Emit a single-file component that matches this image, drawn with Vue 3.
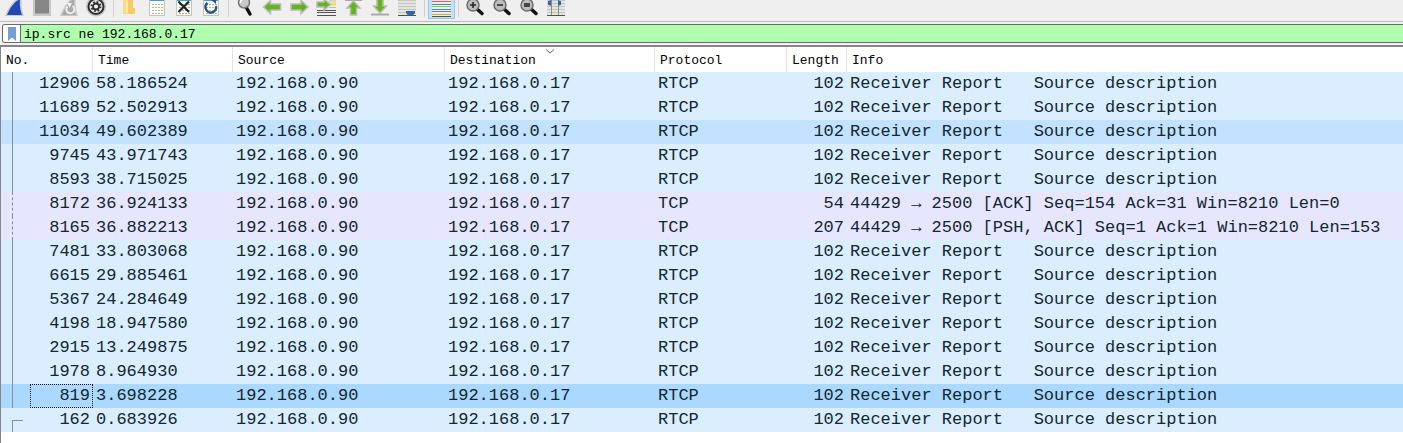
<template>
  <div class="window">
    <div class="toolbar">
      <button type="button" aria-label="Start capture">
        <svg viewBox="0 0 27 21">
          <path d="M3 16 C6 8 10 2 17 -3 H20 C19 5 20 11 22 16 Z" fill="#c9c9c9" />
          <path d="M5 15 C8 8 12 2 18 -1 C17.500 5 18 10 20 15 Z" fill="#2248b8" />
        </svg>
      </button>
      <button type="button" aria-label="Stop capture">
        <svg viewBox="0 0 27 21">
          <rect x="4" y="-2" width="18" height="18" fill="#c8c8c8" />
          <rect x="6" y="-2" width="14" height="15.500" fill="#878787" />
        </svg>
      </button>
      <button type="button" aria-label="Restart capture">
        <svg viewBox="0 0 27 21">
          <path d="M4 16 C7 8 11 2 17 -3 H20 C19 5 20 11 22 16 Z" fill="#c9c9c9" />
          <path d="M6 15 C9 8 12 2 18 -1 C17.500 5 18 10 20 15 Z" fill="#aaa" />
          <path d="M11.500 6.500 A4 4 0 1 0 16.500 6" fill="none" stroke="#eee" stroke-width="2" />
          <path d="M11 3 L16 3 L13.500 8 Z" fill="#eee" />
        </svg>
      </button>
      <button type="button" aria-label="Capture options">
        <svg viewBox="0 0 27 21">
          <circle cx="13" cy="6.500" r="10" fill="#c6c6c6" />
          <circle cx="13" cy="6.500" r="7.500" fill="#f0f0f0" stroke="#303030" stroke-width="2" />
          <circle cx="13" cy="6.500" r="4.500" fill="none" stroke="#303030" stroke-width="2" stroke-dasharray="1.800 1.734" />
          <circle cx="13" cy="6.500" r="3" fill="none" stroke="#303030" stroke-width="1.800" />
        </svg>
      </button>
      <i class="sep"></i>
      <button type="button" aria-label="Open">
        <svg viewBox="0 0 27 21">
          <path d="M6 -1 H14 V14 H6 Z" fill="#fbdc86" />
          <path d="M11 0 H16 V8 H18 V14 H9 V12 L11 10 Z" fill="#f5cd68" />
          <path d="M9 0 L11 2 V12 L9 14 Z" fill="#ffe9a9" />
        </svg>
      </button>
      <button v-for="kind in ['save', 'close', 'reload']" :key="kind" type="button" :aria-label="kind">
        <svg viewBox="0 0 27 21">
          <rect x="5" y="-2" width="16" height="18" fill="#c4c6c2" />
          <rect x="6" y="-1" width="14" height="16" fill="#fbfbef" />
          <path d="M6 0.500 H20" stroke="#3aa0d8" />
          <path d="M8 4.500 H19 M8 7.500 H19 M8 10.500 H19 M8 13.500 H19" stroke="#aeb3b5" stroke-dasharray="2 1" />
          <path v-if="kind === 'close'" d="M7.500 1.500 L18 12 M18 1.500 L7.500 12" stroke="#222" stroke-width="2.200" />
          <template v-if="kind === 'reload'">
            <path d="M9.500 3 A5.300 5.300 0 1 0 18 6" fill="none" stroke="#27528f" stroke-width="2.300" />
            <path d="M12 -1 H18 V4 Z" fill="#27528f" />
          </template>
        </svg>
      </button>
      <i class="sep"></i>
      <button type="button" aria-label="Find packet">
        <svg viewBox="0 0 27 21">
          <path d="M14 7 L18 14" stroke="#111" stroke-width="3.500" stroke-linecap="round" />
          <circle cx="12" cy="2.500" r="5.500" fill="#c9c9c9" stroke="#777" stroke-width="1.500" />
          <path d="M8.500 3 A3.500 3.500 0 0 1 12 -1" fill="none" stroke="#fff" stroke-width="1.500" />
        </svg>
      </button>
      <button type="button" aria-label="Previous packet">
        <svg viewBox="0 0 27 21"><path d="M4.500 7 L11.500 0.500 V4 H21.500 V10 H11.500 V13.500 Z" class="arrow" /></svg>
      </button>
      <button type="button" aria-label="Next packet">
        <svg viewBox="0 0 27 21"><path d="M22 7 L15 0.500 V4 H5 V10 H15 V13.500 Z" class="arrow" /></svg>
      </button>
      <button type="button" aria-label="Go to packet">
        <svg viewBox="0 0 27 21">
          <path d="M4 10.500 H23 M4 15.500 H23 M4 12.500 H23" stroke="#50524f" />
          <path d="M16 7.500 H23 M16 1 H23" stroke="#bbb" />
          <path d="M16 4 H23" stroke="#fadb45" stroke-width="3" />
          <path d="M17.500 4.500 L11 -1 V2 H4 V7 H11 V10 Z" class="arrow" />
        </svg>
      </button>
      <button type="button" aria-label="First packet">
        <svg viewBox="0 0 27 21">
          <path d="M5 0 H22" stroke="#aaa" stroke-width="2" />
          <path d="M13.500 1 L20 8 H16.500 V15 H10.500 V8 H7 Z" class="arrow" />
        </svg>
      </button>
      <button type="button" aria-label="Last packet">
        <svg viewBox="0 0 27 21">
          <path d="M4 14.500 H22" stroke="#aaa" stroke-width="2" />
          <path d="M13 13 L19.500 6 H16 V-2 H10 V6 H6.500 Z" class="arrow" />
        </svg>
      </button>
      <button type="button" aria-label="Auto scroll">
        <svg viewBox="0 0 27 21">
          <rect x="4" y="0" width="18" height="15" fill="#e4e4df" />
          <path d="M4 0.500 H22 M4 3.500 H22 M4 6.500 H22 M4 9.500 H22 M4 12.500 H13" stroke="#c3c5bf" />
          <path d="M4 15.500 H22" stroke="#50524f" />
          <path d="M12 11 H21 V13 L19 15.500 H14 L12 13 Z" fill="#3567a8" />
        </svg>
      </button>
      <i class="sep"></i>
      <button type="button" aria-label="Colorize" class="checked">
        <svg viewBox="0 0 27 21">
          <rect x="4" y="0" width="19" height="16" fill="#e6efeb" />
          <path v-for="line in colorLines" :key="line.y" :d="`M4 ${line.y}.5 H23`" :stroke="line.color" />
        </svg>
      </button>
      <i class="sep"></i>
      <button v-for="kind in ['Zoom in', 'Zoom out', 'Normal size']" :key="kind" type="button" :aria-label="kind">
        <svg viewBox="0 0 27 21">
          <path d="M15 9 L20 13.500" stroke="#111" stroke-width="3.500" stroke-linecap="round" />
          <circle cx="11" cy="5" r="6" fill="#bdbdbd" stroke="#6c6c6c" stroke-width="1.500" />
          <path v-if="kind === 'Zoom in'" d="M8 5 H14 M11 2 V8" stroke="#222" stroke-width="1.500" />
          <path v-if="kind === 'Zoom out'" d="M8 5 H14" stroke="#222" stroke-width="1.500" />
          <path v-if="kind === 'Normal size'" d="M8 4 H14 M8 6 H14" stroke="#222" stroke-width="1.500" />
        </svg>
      </button>
      <button type="button" aria-label="Resize columns">
        <svg viewBox="0 0 27 21">
          <rect x="4" y="0" width="18" height="15" fill="#e4e4df" />
          <path d="M4 0.500 H22 M4 3.500 H22 M4 6.500 H22 M4 9.500 H22 M4 12.500 H22" stroke="#c3c5bf" />
          <path d="M8.500 0 V15 M15.500 0 V15" stroke="#8b8d88" />
          <path d="M4 15.500 H22" stroke="#50524f" />
          <path d="M5 1 H6 L8 0 V6 L6 5 H5 Z M18 1 H17 L15 0 V6 L17 5 H18 Z" fill="#3567a8" />
        </svg>
      </button>
    </div>

    <div class="filter-bar">
      <div class="filter">
        <button type="button" class="bookmark" aria-label="Bookmarks">
          <svg viewBox="0 0 8 14"><path d="M0 0 H8 V14 L4 10.500 L0 14 Z" fill="#739fd3" /></svg>
        </button>
        <input v-model="filter" type="text" aria-label="Display filter" spellcheck="false" />
      </div>
    </div>

    <div class="packets">
      <table>
        <colgroup>
          <col class="col-no" />
          <col class="col-time" />
          <col class="col-source" />
          <col class="col-destination" />
          <col class="col-protocol" />
          <col class="col-length" />
          <col />
        </colgroup>
        <thead>
          <tr>
            <th v-for="name in columns" :key="name">
              {{ name }}
              <svg v-if="name === 'Destination'" class="sort" viewBox="0 0 9 5">
                <path d="M0.500 0.500 L4.500 4 L8.500 0.500" fill="none" stroke="#666" />
              </svg>
            </th>
          </tr>
        </thead>
        <tbody>
          <tr v-for="p in packets" :key="p.no" :class="p.state">
            <td class="number">{{ p.no }}</td>
            <td>{{ p.time }}</td>
            <td>192.168.0.90</td>
            <td>192.168.0.17</td>
            <td>{{ p.protocol }}</td>
            <td class="number">{{ p.length }}</td>
            <td>{{ p.info }}</td>
          </tr>
        </tbody>
      </table>
    </div>
  </div>
</template>

<script setup>
import { ref } from 'vue';

const filter = ref('ip.src ne 192.168.0.17');

const columns = ['No.', 'Time', 'Source', 'Destination', 'Protocol', 'Length', 'Info'];

const colorLines = [
  { y: 1, color: '#ef5b50' },
  { y: 4, color: '#4a86c8' },
  { y: 6, color: '#7bd63a' },
  { y: 9, color: '#4a86c8' },
  { y: 11, color: '#8a6fa8' },
  { y: 14, color: '#d0ac28' },
  { y: 16, color: '#50524f' },
];

const rtcp = (no, time, state = '') => ({
  no,
  time,
  state,
  protocol: 'RTCP',
  length: 102,
  info: 'Receiver Report   Source description',
});

const tcp = (no, time, length, info) => ({ no, time, length, info, state: 'tcp', protocol: 'TCP' });

const packets = [
  rtcp(12906, '58.186524'),
  rtcp(11689, '52.502913'),
  rtcp(11034, '49.602389', 'hovered'),
  rtcp(9745, '43.971743'),
  rtcp(8593, '38.715025'),
  tcp(8172, '36.924133', 54, '44429 → 2500 [ACK] Seq=154 Ack=31 Win=8210 Len=0'),
  tcp(8165, '36.882213', 207, '44429 → 2500 [PSH, ACK] Seq=1 Ack=1 Win=8210 Len=153'),
  rtcp(7481, '33.803068'),
  rtcp(6615, '29.885461'),
  rtcp(5367, '24.284649'),
  rtcp(4198, '18.947580'),
  rtcp(2915, '13.249875'),
  rtcp(1978, '8.964930'),
  rtcp(819, '3.698228', 'selected'),
  rtcp(162, '0.683926', 'first'),
];
</script>

<style>
body {
  margin: 0;
  background: #fff;
}
</style>

<style scoped>
.window {
  overflow: hidden;
  background: #fff;
}

button {
  padding: 0;
  border: none;
  background: none;
}

.toolbar {
  display: flex;
  height: 21px;
  padding-left: 2px;
  background: #efefef;
  border-bottom: 1px solid #b8b8b8;
}

.toolbar button {
  flex: none;
  width: 27px;
  height: 21px;
}

.toolbar svg {
  display: block;
  width: 27px;
  height: 21px;
}

.toolbar .checked {
  box-sizing: border-box;
  height: 19px;
  overflow: hidden;
  background: #c5e0f5;
  box-shadow: inset 1px -1px #8fc9f5, inset -1px 0 #8fc9f5;
}

.sep {
  flex: none;
  width: 1px;
  height: 17px;
  margin: 0 3px;
  background: #cfcfcf;
}

.arrow {
  fill: #62b51c;
  stroke: #b9bdb5;
  stroke-width: 1.5;
}

.filter-bar {
  padding: 2px 0 2px 2px;
  background: #f3f1f3;
}

.filter {
  display: flex;
  height: 17px;
  border: 1px solid #6e686e;
  border-right: none;
  border-radius: 3px 0 0 3px;
  background: #afffaf;
  overflow: hidden;
}

.bookmark {
  display: flex;
  flex: none;
  align-items: center;
  justify-content: center;
  width: 18px;
  background: #fff;
  border-right: 1px solid #6e686e;
}

.bookmark svg {
  width: 8px;
  height: 14px;
}

.filter input {
  flex: 1;
  min-width: 0;
  padding: 2px 3px 0;
  border: none;
  outline: none;
  background: #afffaf;
  color: #000;
  font: 13px/15px 'Liberation Mono', monospace;
}

.packets {
  border-top: 2px solid #85858b;
  border-left: 1px solid #85858b;
  padding-bottom: 11px;
}

table {
  width: 100%;
  table-layout: fixed;
  border-collapse: separate;
  border-spacing: 0;
}

.col-no {
  width: 92px;
}

.col-time {
  width: 140px;
}

.col-source {
  width: 212px;
}

.col-destination {
  width: 210px;
}

.col-protocol {
  width: 132px;
}

.col-length {
  width: 60px;
}

th {
  position: relative;
  padding: 2px 0 0 5px;
  border-right: 1px solid #e2e2e2;
  color: #000;
  font: 13px/23px 'Liberation Mono', monospace;
  text-align: left;
  white-space: nowrap;
}

th:last-child {
  border-right: none;
}

.sort {
  position: absolute;
  top: 2px;
  left: 50%;
  width: 9px;
  height: 5px;
  transform: translateX(-50%);
}

td {
  height: 24px;
  padding: 0 3px;
  color: #12272e;
  font: 17px/24px 'Liberation Mono', monospace;
  white-space: pre;
}

.number {
  text-align: right;
}

tbody tr {
  background: #daeeff;
}

tbody .tcp {
  background: #e7e6ff;
}

tbody .hovered {
  background: #c2e2ff;
}

tbody .selected {
  background: #abd8ff;
}

/* conversation line down the left side */
td:first-child {
  position: relative;
}

td:first-child::before {
  content: '';
  position: absolute;
  top: 0;
  bottom: 0;
  left: 11px;
  width: 0;
  border-left: 1px solid #85919a;
}

.tcp td:first-child::before {
  border-left-style: dashed;
}

.first td:first-child::before {
  top: 12px;
  width: 10px;
  border-top: 1px solid #85919a;
}

.selected td:first-child::after {
  content: '';
  position: absolute;
  inset: 0 0 0 29px;
  border: 1px dotted #111;
}
</style>
